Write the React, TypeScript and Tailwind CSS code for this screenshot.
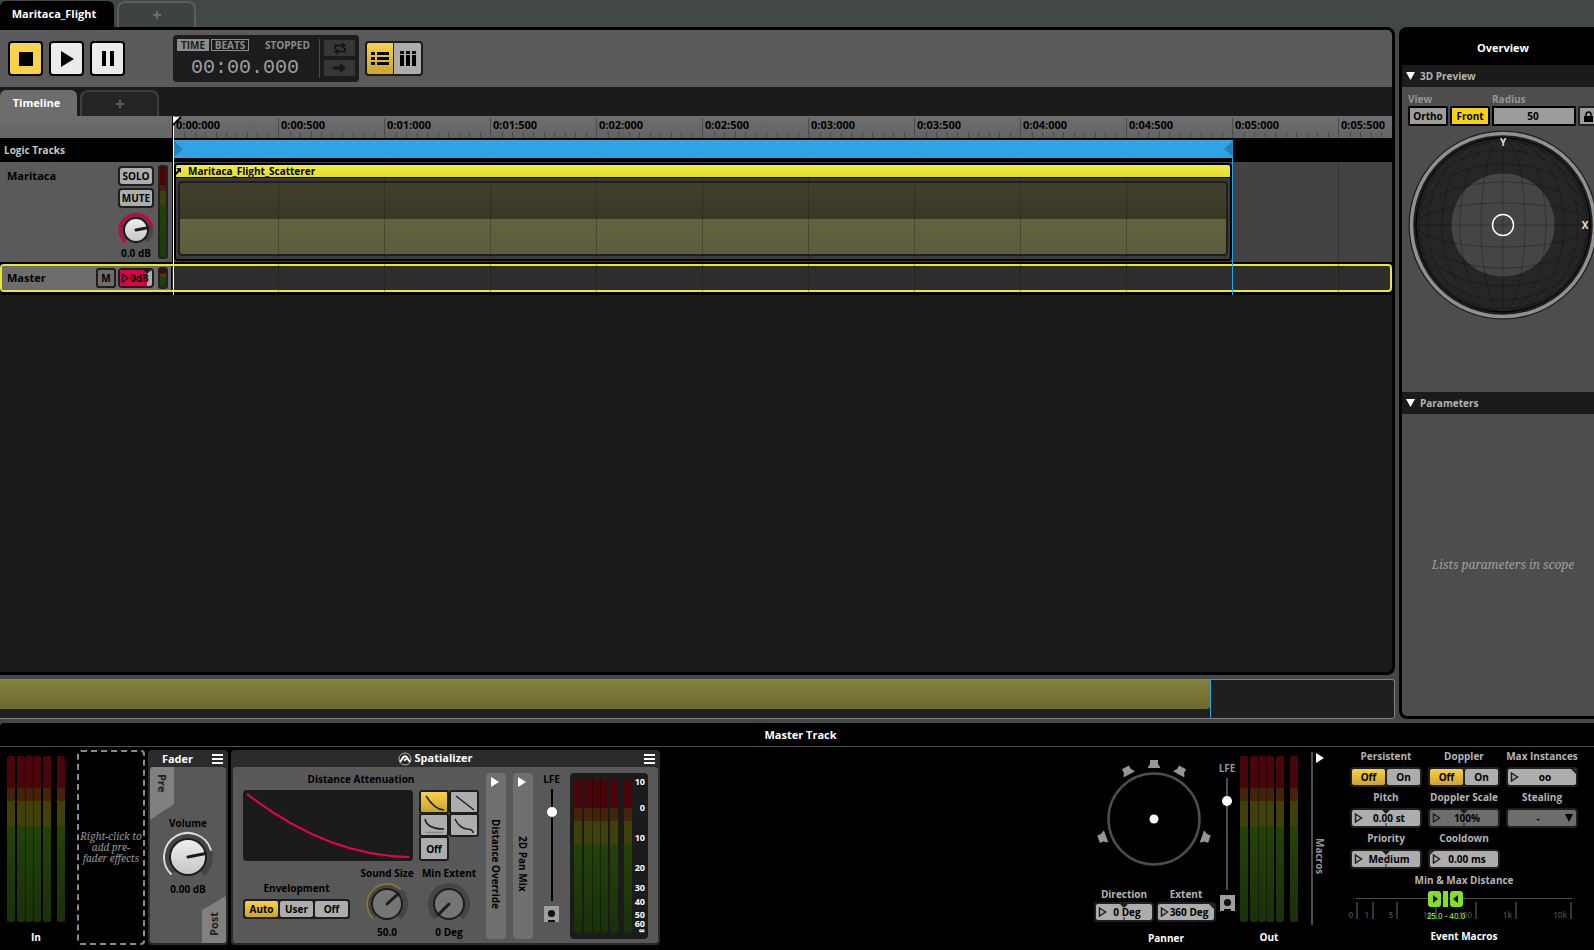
import React from 'react';

const MAJOR_TICKS = [
  '0:00:000', '0:00:500', '0:01:000', '0:01:500', '0:02:000', '0:02:500',
  '0:03:000', '0:03:500', '0:04:000', '0:04:500', '0:05:000', '0:05:500',
];

const METER_SCALE = [
  { label: '10', top: 2 },
  { label: '0', top: 19 },
  { label: '10', top: 38 },
  { label: '20', top: 58 },
  { label: '30', top: 71 },
  { label: '40', top: 80 },
  { label: '50', top: 88 },
  { label: '60', top: 94 },
  { label: '∞', top: 99 },
];

const DISTANCE_SCALE = [
  { label: '0', x: 7 },
  { label: '1', x: 23 },
  { label: '5', x: 47 },
  { label: '10', x: 86 },
  { label: '100', x: 126 },
  { label: '1k', x: 166 },
  { label: '10k', x: 221 },
];

/* ---------- Shared controls ---------- */

const point = (c: number, r: number, deg: number) => {
  const a = ((deg - 90) * Math.PI) / 180;
  return `${(c + r * Math.cos(a)).toFixed(2)} ${(c + r * Math.sin(a)).toFixed(2)}`;
};

const arc = (c: number, r: number, from: number, to: number) =>
  `M${point(c, r, from)} A${r} ${r} 0 ${to - from > 180 ? 1 : 0} 1 ${point(c, r, to)}`;

interface KnobProps {
  label: string;
  size: number;
  body: number;
  ring: number;
  angle: number;
  color: string;
  light?: boolean;
  thick?: number;
}

const Knob: React.FC<KnobProps> = ({ label, size, body, ring, angle, color, light, thick = 3 }) => {
  const c = size / 2;
  return (
    <label className="relative block shrink-0">
      <input type="range" aria-label={label} className="absolute inset-0 w-full h-full opacity-0" />
      <svg width={size} height={size} className="block">
        <defs>
          <linearGradient id="knobFace" x1="0" y1="0" x2="0" y2="1">
            <stop offset="0" stopColor="#f0f0f0" />
            <stop offset="1" stopColor="#c4c4c4" />
          </linearGradient>
        </defs>
        <path d={arc(c, ring - 2, -138, 138)} fill="none" stroke="#454545" strokeWidth="6" />
        {angle > -135 && (
          <path d={arc(c, ring, -135, angle - 6)} fill="none" stroke={color} strokeWidth={thick} strokeLinecap="round" />
        )}
        <circle cx={c} cy={c} r={body} fill={light ? 'url(#knobFace)' : '#757575'} stroke="#1c1c1c" strokeWidth="2" />
        <path d={`M${c} ${c} L${point(c, body, angle)}`} stroke="#1c1c1c" strokeWidth="3" strokeLinecap="round" />
      </svg>
    </label>
  );
};

const METER_BARS = ['', 'ml-[2px]', 'border-l border-black/40', 'border-l border-black/40', 'ml-[2px]', 'ml-[6px]'];

const Meter: React.FC = () => (
  <div className="flex h-full">
    {METER_BARS.map((cls, i) => (
      <div
        key={i}
        className={`w-[8px] rounded-[2px] bg-[linear-gradient(#49050a_0_19%,#43240a_19%_27%,#40400b_27%_42%,#24430a_42%,#1a3009)] ${cls}`}
      />
    ))}
  </div>
);

const SlimMeter: React.FC = () => (
  <div className="w-[10px] shrink-0 rounded-[3px] border-2 border-[#222] bg-[linear-gradient(#49050a_0_20%,#43240a_20%_27%,#40400b_27%_42%,#24430a_42%,#1d3a09)]" />
);

interface ToggleProps {
  options: string[];
}

const Toggle: React.FC<ToggleProps> = ({ options }) => (
  <div className="flex gap-[2px] h-[20px] p-[2px] rounded-[3px] bg-[#1e1e1e]">
    {options.map((option, i) => (
      <button
        key={option}
        className={`flex-1 rounded-[2px] text-[10px] leading-[16px] text-black ${
          i === 0 ? 'bg-linear-to-b from-[#fbd04a] to-[#c9a52f]' : 'bg-[#adadad]'
        }`}
      >
        {option}
      </button>
    ))}
  </div>
);

interface FieldProps {
  label: string;
  value: string;
  dim?: boolean;
  tight?: boolean;
  mark?: 'center' | 'left' | 'right';
}

const Field: React.FC<FieldProps> = ({ label, value, dim, tight, mark }) => (
  <label className="block text-[10px] text-[#b4b4b4] text-center whitespace-nowrap">
    <span className={`block leading-[12px] ${tight ? 'mb-[2px]' : 'mb-[5px]'}`}>{label}</span>
    <span className={`relative block h-[20px] border-2 border-[#1e1e1e] rounded-[4px] overflow-hidden ${dim ? 'bg-[#6d6d6d]' : 'bg-[#adadad]'}`}>
      <svg width="10" height="10" className="absolute left-[2px] top-[3px]">
        <path d="M1.5 1 L7.5 5 L1.5 9 Z" fill="none" stroke="#222" strokeWidth="1.5" />
      </svg>
      {mark === 'center' && (
        <svg width="8" height="16" className="absolute left-1/2 -ml-[4px] top-0">
          <path d="M0 0 H8 L4 4 Z M3.5 13 H4.5 V16 H3.5 Z" fill="#1e1e1e" />
        </svg>
      )}
      {mark === 'right' && (
        <svg width="5" height="5" className="absolute right-0 top-0">
          <path d="M0 0 H5 V5 Z" fill="#1e1e1e" />
        </svg>
      )}
      {mark === 'left' && (
        <svg width="4" height="4" className="absolute left-0 top-0">
          <path d="M0 0 H4 L0 4 Z" fill="#1e1e1e" />
        </svg>
      )}
      <input
        defaultValue={value}
        className="relative block w-full h-[16px] pl-[6px] text-center text-[10px] leading-[16px] text-black bg-transparent outline-none"
      />
    </span>
  </label>
);

interface LfeProps {
  labelClass: string;
  trackClass: string;
}

const LfeSlider: React.FC<LfeProps> = ({ labelClass, trackClass }) => (
  <div className="flex flex-col items-center">
    <span className={`text-[10px] leading-[12px] ${labelClass}`}>LFE</span>
    <label className="relative block w-[10px] h-[112px] mt-[4px]">
      <input type="range" aria-label="LFE level" className="absolute inset-0 w-full h-full opacity-0" />
      <span className={`block w-[2px] h-full mx-auto ${trackClass}`} />
      <span className="absolute left-0 top-[18px] w-[10px] h-[10px] rounded-full bg-white" />
    </label>
    <svg width="15" height="16" className="block mt-[5px]">
      <path d="M0 0 H15 V16 H0 Z" fill="#a0a0a0" />
      <circle cx="7.5" cy="7.5" r="3.6" fill="#111" />
      <path d="M4 14 H11 V16 H4 Z" fill="#111" />
    </svg>
  </div>
);

const MenuIcon: React.FC = () => (
  <button aria-label="Effect menu" className="absolute right-[5px] top-[4px] flex flex-col gap-[2px] w-[11px]">
    <span className="h-[2px] bg-white" />
    <span className="h-[2px] bg-white" />
    <span className="h-[2px] bg-white" />
  </button>
);

/* ---------- Editor ---------- */

const Transport: React.FC = () => (
  <div className="flex items-center h-[57px] shrink-0 pl-[8px] bg-[#5a5a5a]">
    <div className="flex gap-[6px]">
      <button aria-label="Stop" className="w-[35px] h-[35px] flex items-center justify-center rounded-[4px] border-2 border-black bg-[#fbd14b]">
        <svg width="14" height="14"><path d="M0 0 H14 V14 H0 Z" /></svg>
      </button>
      <button aria-label="Play" className="w-[35px] h-[35px] flex items-center justify-center rounded-[4px] border-2 border-black bg-[#ebebeb]">
        <svg width="14" height="16"><path d="M1 0 L14 8 L1 16 Z" /></svg>
      </button>
      <button aria-label="Pause" className="w-[35px] h-[35px] flex items-center justify-center rounded-[4px] border-2 border-black bg-[#ebebeb]">
        <svg width="12" height="15"><path d="M0 0 H4 V15 H0 Z M8 0 H12 V15 H8 Z" /></svg>
      </button>
    </div>

    <div className="flex w-[186px] h-[47px] ml-[48px] p-[4px] rounded-[4px] bg-[#1c1c1c]">
      <div className="w-[142px]">
        <div className="flex items-center gap-[2px] text-[10px] leading-[12px] text-[#8c8c8c]">
          <button className="w-[32px] h-[12px] bg-[#8c8c8c] text-[#1c1c1c]">TIME</button>
          <button className="w-[38px] h-[12px] leading-[10px] border border-[#8c8c8c]">BEATS</button>
          <span className="ml-[14px]">STOPPED</span>
        </div>
        <div className="mt-[3px] pr-[6px] text-center font-normal text-[20px] leading-[28px] text-[#a0a0a0] font-['Liberation_Mono',monospace]">
          00:00.000
        </div>
      </div>
      <div className="w-px bg-[#4a4a4a]" />
      <div className="flex flex-col gap-[4px] ml-[4px] mt-px">
        <button aria-label="Loop" className="w-[31px] h-[16px] flex items-center justify-center rounded-[2px] bg-[#373737]">
          <svg width="14" height="13" fill="none" stroke="#161616" strokeWidth="2">
            <path d="M2 7 V3.5 H10 M12 6 V9.5 H4" />
            <path d="M9 0 L13 3.5 L9 7 Z M5 6 L1 9.5 L5 13 Z" fill="#161616" stroke="none" />
          </svg>
        </button>
        <button aria-label="Follow playhead" className="w-[31px] h-[16px] flex items-center justify-center rounded-[2px] bg-[#373737]">
          <svg width="13" height="10"><path d="M0 3.5 H7 V0 L13 5 L7 10 V6.5 H0 Z" fill="#161616" /></svg>
        </button>
      </div>
    </div>

    <div className="flex ml-[6px] rounded-[4px] border-2 border-[#1c1c1c] bg-[#1c1c1c] gap-px">
      <button aria-label="Track view" className="w-[26px] h-[31px] flex items-center justify-center rounded-l-[2px] bg-linear-to-b from-[#fbd04a] to-[#c9a52f]">
        <svg width="18" height="13"><path d="M0 0 H4 V3 H0 Z M6 0 H18 V3 H6 Z M0 5 H4 V8 H0 Z M6 5 H18 V8 H6 Z M0 10 H4 V13 H0 Z M6 10 H18 V13 H6 Z" /></svg>
      </button>
      <button aria-label="Mixer view" className="w-[27px] h-[31px] flex items-center justify-center rounded-r-[2px] bg-[#adadad]">
        <svg width="16" height="15"><path d="M0 0 H4 V3 H0 Z M6 0 H10 V3 H6 Z M12 0 H16 V3 H12 Z M0 4 H4 V15 H0 Z M6 4 H10 V15 H6 Z M12 4 H16 V15 H12 Z" /></svg>
      </button>
    </div>
  </div>
);

const Ruler: React.FC = () => (
  <div className="flex h-[22px] overflow-hidden bg-linear-to-b from-[#6d6d6d] to-[#646464]">
    {MAJOR_TICKS.map((tick, i) => (
      <div key={tick} className={`shrink-0 flex flex-col justify-between mt-[2px] border-l ${i === 0 ? 'w-[105px] border-transparent' : 'w-[106px] border-[#4c4c4c]'}`}>
        <span className="pl-[2px] text-[11px] leading-[14px] text-black">{tick}</span>
        <div className="grid grid-cols-10 h-[6px]">
          {Array.from({ length: 10 }, (_, n) => (
            <span key={n} className={`border-l ${n === 0 ? 'border-transparent' : 'border-[#4c4c4c]'}`} />
          ))}
        </div>
      </div>
    ))}
  </div>
);

const TrackHeaders: React.FC = () => (
  <div className="w-[173px] shrink-0 border-r border-black">
    <div className="h-[22px] bg-linear-to-b from-[#6d6d6d] to-[#646464]" />
    <div className="h-[24px] pl-[4px] bg-black text-[10px] leading-[24px] text-[#c8c8c8]">Logic Tracks</div>
    <div className="flex h-[100px] pl-[7px] pr-[4px] bg-[#5a5a5a]">
      <span className="flex-1 mt-[6px] text-[11px] leading-[16px] text-black">Maritaca</span>
      <div className="flex flex-col items-center w-[36px] mt-[4px] mr-[4px] text-[10px] text-black">
        <button className="w-full h-[20px] mb-[2px] leading-[16px] rounded-[4px] border-2 border-[#1e1e1e] bg-[#adadad]">SOLO</button>
        <button className="w-full h-[20px] leading-[16px] rounded-[4px] border-2 border-[#1e1e1e] bg-[#adadad]">MUTE</button>
        <div className="-mx-[2px] mt-[3px]">
          <Knob label="Maritaca volume" size={38} body={12} ring={16} angle={79} color="#d4003f" light />
        </div>
        <span className="leading-[12px] -mt-[2px] whitespace-nowrap">0.0 dB</span>
      </div>
      <div className="flex py-[3px]">
        <SlimMeter />
      </div>
    </div>
  </div>
);

const Clip: React.FC = () => (
  <div className="w-[1058px] h-[98px] ml-px rounded-[4px] border-2 border-black bg-[#3b3b3b] overflow-hidden">
    <div className="relative z-10 flex items-center h-[13px] border-b border-black bg-linear-to-b from-[#f0ec3e] to-[#e2de36]">
      <svg width="6" height="8" className="-ml-px"><path d="M1 1 H6 V6 L4.5 4.5 L1 8 L0 6.5 L3 3 Z" /></svg>
      <span className="ml-[7px] text-[10px] leading-[12px] text-black">Maritaca_Flight_Scatterer</span>
    </div>
    <div className="mx-[2px] mt-[3px] h-[75px] rounded-[4px] border-2 border-[#1e1e1e] bg-[linear-gradient(#42402c_0,#3b3926_50%,#64633f_50%,#5c5b3c)]" />
  </div>
);

const Timeline: React.FC = () => (
  <div className="relative shrink-0 bg-black">
    <div className="flex">
      <TrackHeaders />
      <div className="relative flex-1 min-w-0 overflow-hidden">
        <Ruler />
        <div className="h-[24px] pt-[2px]">
          <div className="relative z-10 flex justify-between w-[1059px] h-[18px] ml-px bg-[#2fa3e4]">
            <svg width="9" height="18"><path d="M0 1 L9 9 L0 17 Z" fill="#2580b4" /></svg>
            <svg width="9" height="18"><path d="M9 1 L0 9 L9 17 Z" fill="#2580b4" /></svg>
          </div>
        </div>
        <div className="h-[100px] pt-px bg-[#434343]">
          <Clip />
        </div>
      </div>
    </div>

    <div className="flex h-[28px] mt-[2px] mb-[3px] rounded-[4px] border-2 border-[#e9e53f] bg-[#2e2e2e]">
      <div className="flex items-center w-[170px] h-full pl-[5px] pr-[3px] bg-[#6d6d6d] border-r border-black text-black">
        <span className="flex-1 text-[11px] leading-[16px]">Master</span>
        <button className="w-[20px] h-[20px] text-[10px] leading-[16px] rounded-[3px] border-2 border-[#1e1e1e]">M</button>
        <div className="relative w-[36px] h-[20px] ml-[2px] mr-[4px] rounded-[4px] border-2 border-[#1e1e1e] bg-[#adadad] overflow-hidden">
          <svg width="32" height="16" className="absolute inset-0">
            <path d="M0 0 H23 L27 4 V16 H0 Z" fill="#dc0046" />
            <path d="M23 0 H31 L27 4 Z" fill="#1e1e1e" />
            <path d="M2.500 4 L8 8 L2.500 12 Z" fill="none" stroke="#1e1e1e" strokeWidth="1.500" />
          </svg>
          <input aria-label="Master level" defaultValue="0dB" className="relative block w-full h-[16px] pl-[10px] text-[10px] leading-[16px] bg-transparent outline-none" />
        </div>
        <div className="flex h-[22px]">
          <SlimMeter />
        </div>
      </div>
    </div>

    {/* Grid lines, loop end and playhead run across every track */}
    <div className="absolute left-[173px] right-0 top-[24px] bottom-[3px] overflow-hidden pointer-events-none">
      <div className="flex h-full">
        {MAJOR_TICKS.map((tick, i) => (
          <div key={tick} className={`shrink-0 ${i === 0 ? 'w-[105px]' : 'w-[106px] border-l border-[#141414]/30'}`} />
        ))}
      </div>
    </div>
    <div className="absolute left-[1232px] top-[24px] bottom-0 w-px bg-[#2fa3e4]" />
    <div className="absolute left-[173px] top-0 bottom-0 w-px bg-white z-20" />
    <svg width="10" height="10" className="absolute left-[172px] top-0 z-20">
      <path d="M1 1 H9 L1 9 Z" fill="#fff" />
      <path d="M9 1 L1 9" stroke="#000" strokeWidth="2" />
    </svg>
  </div>
);

const Editor: React.FC = () => (
  <section className="flex-1 min-h-0 flex flex-col overflow-hidden rounded-r-[8px] border-y-[3px] border-r-[3px] border-black bg-[#1b1b1b]">
    <Transport />
    <div className="flex items-end h-[29px] shrink-0 gap-[3px] bg-[#1b1b1b]">
      <button className="w-[77px] h-[26px] pr-[4px] rounded-t-[6px] bg-[#6d6d6d] text-[11px] leading-[24px] text-white">Timeline</button>
      <button aria-label="New sheet" className="w-[79px] h-[26px] flex items-center justify-center rounded-t-[8px] border-2 border-b-0 border-[#3f3f3f] bg-[#242424]">
        <svg width="8" height="8"><path d="M3 0 H5 V3 H8 V5 H5 V8 H3 V5 H0 V3 H3 Z" fill="#5a5a5a" /></svg>
      </button>
    </div>
    <Timeline />
  </section>
);

/* ---------- Overview ---------- */

const SPHERE_RADII = [22, 43, 61, 75, 84];

const Sphere: React.FC = () => (
  <svg width="190" height="190" className="block">
    <circle cx="95" cy="95" r="94.500" fill="#1e1e1e" />
    <circle cx="95" cy="95" r="91.500" fill="#1e1e1e" stroke="#919191" strokeWidth="3.500" />
    <circle cx="95" cy="95" r="87" fill="#262626" />
    <circle cx="95" cy="95" r="51.500" fill="#454545" />
    <g fill="none" stroke="#000" strokeOpacity="0.25">
      <circle cx="95" cy="95" r="87" strokeOpacity="0.8" />
      {SPHERE_RADII.map((r) => (
        <ellipse key={`v${r}`} cx="95" cy="95" rx={r} ry="87" />
      ))}
      {SPHERE_RADII.map((r) => (
        <ellipse key={`h${r}`} cx="95" cy="95" rx="87" ry={r} />
      ))}
      <path d="M95 8 V182 M8 95 H182" />
    </g>
    <circle cx="95" cy="95" r="10.500" fill="none" stroke="#fff" strokeWidth="1.500" />
    <text x="95" y="16" textAnchor="middle" fontSize="10" fill="#e0e0e0">Y</text>
    <text x="177" y="99" textAnchor="middle" fontSize="10" fill="#e0e0e0">X</text>
  </svg>
);

const SectionTitle: React.FC<{ title: string }> = ({ title }) => (
  <button className="flex items-center w-full h-[22px] shrink-0 pl-[4px] gap-[5px] bg-[#1b1b1b] text-[10px] text-[#b4b4b4]">
    <svg width="9" height="8"><path d="M0 0 H9 L4.500 8 Z" fill="#fff" /></svg>
    {title}
  </button>
);

const Overview: React.FC = () => (
  <aside className="w-[195px] shrink-0 overflow-hidden">
    <div className="flex flex-col w-[208px] h-full overflow-hidden rounded-[8px] border-x-[3px] border-b-[3px] border-black bg-[#4d4d4d]">
      <h2 className="h-[38px] shrink-0 bg-black text-center text-[11px] leading-[42px] text-white">Overview</h2>
      <SectionTitle title="3D Preview" />
      <div className="h-[305px] shrink-0 pl-[6px] pt-[5px]">
        <div className="flex gap-[2px] text-[10px] text-black">
          <div>
            <span className="block leading-[14px] text-[#969696]">View</span>
            <div className="flex gap-[2px]">
              <button className="w-[40px] h-[20px] leading-[16px] rounded-[2px] border-2 border-black bg-[#9c9c9c]">Ortho</button>
              <button className="w-[40px] h-[20px] leading-[16px] rounded-[2px] border-2 border-black bg-[#f8d210]">Front</button>
            </div>
          </div>
          <label>
            <span className="block leading-[14px] text-[#969696]">Radius</span>
            <input defaultValue="50" className="block w-[84px] h-[20px] pr-[2px] text-center leading-[16px] border-2 border-black bg-[#9c9c9c]" />
          </label>
          <button aria-label="Lock radius" className="self-end w-[20px] h-[20px] flex items-center justify-center rounded-[2px] border-2 border-[#1e1e1e] bg-[#9c9c9c]">
            <svg width="9" height="11">
              <path d="M0 5 H9 V11 H0 Z" />
              <path d="M2 5 V3.500 A2.500 2.500 0 0 1 7 3.500 V5" fill="none" stroke="#000" strokeWidth="1.500" />
            </svg>
          </button>
        </div>
        <div className="mt-[4px]">
          <Sphere />
        </div>
      </div>
      <SectionTitle title="Parameters" />
      <div className="flex-1 flex items-center justify-center font-['Noto_Serif','Droid_Serif','DejaVu_Serif','Liberation_Serif',serif] font-normal italic text-[12px] text-[#a0a0a0] whitespace-nowrap">
        Lists parameters in scope
      </div>
    </div>
  </aside>
);

/* ---------- Deck ---------- */

const FaderPanel: React.FC = () => (
  <section className="relative flex flex-col w-[80px] h-[195px] ml-[3px] px-[2px] pb-[2px] rounded-[4px] bg-[#2b2b2b]">
    <h3 className="h-[17px] pr-[21px] text-center text-[11px] leading-[18px] text-white">Fader</h3>
    <MenuIcon />
    <div className="flex-1 flex flex-col rounded-[3px] bg-[#585858] overflow-hidden">
      <div className="h-[49px] w-[24px] mb-[-4px]">
        <div className="h-[53px] flex justify-center pt-[7px] bg-[#808080] [clip-path:polygon(0_0,100%_0,100%_70%,0_100%)] text-[11px] text-[#1e1e1e]">
          <span className="[writing-mode:vertical-rl] leading-[24px]">Pre</span>
        </div>
      </div>
      <div className="flex flex-col items-center mt-[4px] text-[10px] leading-[14px] text-black">
        <span className="mb-px">Volume</span>
        <Knob label="Fader volume" size={52} body={18} ring={24} angle={79} color="#d8d8d8" light thick={2} />
        <span className="-mt-px">0.00 dB</span>
      </div>
      <div className="mt-auto ml-auto w-[24px] h-[53px] flex justify-center items-end pb-[7px] bg-[#808080] [clip-path:polygon(0_30%,100%_0,100%_100%,0_100%)] text-[11px] text-[#1e1e1e]">
        <span className="[writing-mode:vertical-rl] rotate-180 leading-[24px]">Post</span>
      </div>
    </div>
  </section>
);

const CURVES = [
  'M5 4 Q14 18 23 18',
  'M5 4 L23 18',
  'M4 4 Q6 14 23 14',
  'M4 4 Q8 13 16 14 Q22 14 22 18',
];

const CurvePicker: React.FC = () => (
  <div className="grid grid-cols-2 w-[60px] content-start">
    {CURVES.map((d, i) => (
      <button
        key={d}
        aria-label={`Attenuation curve ${i + 1}`}
        className={`w-[30px] h-[24px] -mb-px border-2 border-[#1e1e1e] rounded-[3px] flex items-center justify-center ${
          i === 0 ? 'bg-linear-to-b from-[#fbd04a] to-[#c9a52f]' : 'bg-[#adadad]'
        }`}
      >
        <svg width="26" height="20" fill="none" stroke="#1e1e1e" strokeWidth="1.500">
          <path d={d} />
          {i === 2 && <path d="M4 17.500 H22" stroke="#8a8a8a" />}
        </svg>
      </button>
    ))}
    <button className="w-[30px] h-[25px] border-2 border-[#1e1e1e] rounded-[3px] bg-[#adadad] text-[10px] leading-[20px] text-black">Off</button>
  </div>
);

const Rail: React.FC<{ title: string }> = ({ title }) => (
  <button className="relative w-[20px] h-full ml-[7px] pt-[16px] flex items-center justify-center rounded-[4px] bg-[#6f6f6f] text-[10px] text-black">
    <svg width="8" height="10" className="absolute left-[5px] top-[4px]"><path d="M0 0 L8 5 L0 10 Z" fill="#fff" /></svg>
    <span className="[writing-mode:vertical-rl] leading-[20px]">{title}</span>
  </button>
);

const Spatializer: React.FC = () => (
  <section className="relative flex flex-col w-[429px] h-[195px] ml-[3px] px-[2px] pb-[2px] rounded-[4px] bg-[#2b2b2b]">
    <h3 className="flex items-center justify-center gap-[2px] h-[17px] pr-[20px] text-[11px] text-white">
      <svg width="14" height="14" fill="none">
        <circle cx="7" cy="7" r="6" stroke="#b0b0b0" />
        <path d="M2 10 L5.500 5 Q7 3.500 8.500 5 L12 10 M6 8.500 L8.500 7" stroke="#fff" strokeWidth="2" />
      </svg>
      Spatializer
    </h3>
    <MenuIcon />
    <div className="flex-1 flex pl-[10px] pr-[10px] pt-[6px] pb-[4px] rounded-[3px] bg-[#585858] text-[10px] leading-[14px] text-black">
      <div className="w-[236px]">
        <div className="text-center leading-[12px] mb-[5px]">Distance Attenuation</div>
        <div className="flex gap-[6px]">
          <div className="w-[170px] h-[71px] rounded-[4px] bg-[#1b1b1b]">
            <svg width="170" height="71"><path d="M4 4 Q84 66 166 67" fill="none" stroke="#ee0050" strokeWidth="2" /></svg>
          </div>
          <CurvePicker />
        </div>
        <div className="flex h-[78px]">
          <div className="w-[107px] pt-[20px] text-center">
            <div className="mb-[4px]">Envelopment</div>
            <Toggle options={['Auto', 'User', 'Off']} />
          </div>
          <div className="flex flex-col items-center w-[74px] pt-[5px]">
            <span>Sound Size</span>
            <div className="my-px">
              <Knob label="Sound size" size={46} body={15} ring={20} angle={48} color="#82753a" thick={2} />
            </div>
            <span className="-mt-[3px]">50.0</span>
          </div>
          <div className="flex flex-col items-center w-[50px] pt-[5px] whitespace-nowrap">
            <span>Min Extent</span>
            <div className="my-px">
              <Knob label="Min extent" size={46} body={15} ring={20} angle={-135} color="#82753a" />
            </div>
            <span className="-mt-[3px]">0 Deg</span>
          </div>
        </div>
      </div>
      <Rail title="Distance Override" />
      <Rail title="2D Pan Mix" />
      <div className="flex justify-center w-[37px]">
        <LfeSlider labelClass="text-black" trackClass="bg-black" />
      </div>
      <div className="flex w-[78px] h-full py-[6px] pl-[4px] rounded-[4px] bg-[#1b1b1b]">
        <Meter />
        <div className="relative flex-1 text-[9px] text-white">
          {METER_SCALE.map(({ label, top }, i) => (
            <span key={i} className="absolute right-[3px] -mt-[6px] leading-[12px]" style={{ top: `${top}%` }}>{label}</span>
          ))}
        </div>
      </div>
    </div>
  </section>
);

const SPEAKERS = [0, -29, 29, -110, 110];

const Panner: React.FC = () => (
  <div className="w-[126px]">
    <svg width="126" height="138" className="block">
      <circle cx="64" cy="69" r="45.500" fill="none" stroke="#4d4d4d" strokeWidth="2.500" />
      <circle cx="64" cy="69" r="4.500" fill="#fff" />
      {SPEAKERS.map((deg) => (
        <path key={deg} transform={`rotate(${deg} 64 69)`} d="M60 10 H68 V14 L70 17 V18 H58 V17 L60 14 Z" fill="#969696" />
      ))}
    </svg>
    <div className="grid grid-cols-2 gap-[2px] pl-[4px]">
      <Field label="Direction" value="0 Deg" mark="center" tight />
      <Field label="Extent" value="360 Deg" mark="right" tight />
    </div>
    <div className="mt-[9px] pl-[26px] text-center text-[10px] leading-[14px] text-white">Panner</div>
  </div>
);

const Macros: React.FC = () => (
  <section className="w-[228px] ml-[23px] mr-[16px]">
    <div className="grid grid-cols-3 gap-x-[6px] gap-y-[4px]">
      <div className="text-center text-[10px] text-[#b4b4b4]">
        <div className="leading-[12px] mb-[5px]">Persistent</div>
        <Toggle options={['Off', 'On']} />
      </div>
      <div className="text-center text-[10px] text-[#b4b4b4]">
        <div className="leading-[12px] mb-[5px]">Doppler</div>
        <Toggle options={['Off', 'On']} />
      </div>
      <Field label="Max Instances" value="oo" mark="right" />
      <Field label="Pitch" value="0.00 st" mark="center" />
      <Field label="Doppler Scale" value="100%" mark="center" dim />
      <label className="block text-[10px] text-[#b4b4b4] text-center">
        <span className="block leading-[12px] mb-[5px]">Stealing</span>
        <span className="relative block h-[20px] border-2 border-[#1e1e1e] rounded-[4px] bg-[#6d6d6d]">
          <select className="block w-full h-[16px] pr-[8px] appearance-none text-center leading-[16px] text-black">
            <option>-</option>
          </select>
          <svg width="8" height="8" className="absolute right-[3px] top-[4px]"><path d="M0 0 H8 L4 8 Z" /></svg>
        </span>
      </label>
      <Field label="Priority" value="Medium" mark="center" />
      <Field label="Cooldown" value="0.00 ms" mark="left" />
    </div>
    <div className="mt-[4px] text-center text-[10px] leading-[14px] text-[#b4b4b4]">Min &amp; Max Distance</div>
    <svg width="228" height="34" className="block mt-[3px] overflow-visible font-semibold">
      <path d="M6 8.500 H222" stroke="#4d4d4d" />
      {DISTANCE_SCALE.map(({ label, x }) => (
        <g key={label}>
          <path d={`M${x} 12 V29`} stroke="#333" strokeWidth="2" />
          <text x={x - 4} y="28" textAnchor="end" fontSize="8" fill="#4d4d4d">{label}</text>
        </g>
      ))}
      <rect x="78" y="1" width="13" height="16" rx="3" fill="#86dd2b" />
      <rect x="93" y="1" width="5" height="16" fill="#86dd2b" />
      <rect x="100" y="1" width="13" height="16" rx="3" fill="#86dd2b" />
      <path d="M83 5 L88 9 L83 13 Z M108 5 L103 9 L108 13 Z" fill="#111" />
      <text x="96" y="29" textAnchor="middle" fontSize="8" fill="#86dd2b">25.0 - 40.0</text>
    </svg>
    <div className="mt-[5px] text-center text-[10px] leading-[14px] text-white">Event Macros</div>
  </section>
);

const Deck: React.FC = () => (
  <footer className="shrink-0 overflow-hidden rounded-tl-[4px] bg-black">
    <h2 className="h-[24px] pl-[7px] border-b border-[#4d4d4d] text-center text-[11px] leading-[24px] text-white">Master Track</h2>
    <div className="flex h-[203px] pt-[3px]">
      <div className="w-[58px] ml-[7px] pt-[6px] text-center text-[10px] leading-[14px] text-white">
        <div className="h-[166px] mb-[8px]"><Meter /></div>
        In
      </div>
      <div className="flex items-center justify-center w-[68px] h-[195px] ml-[12px] rounded-[4px] border-2 border-dashed border-[#8c8c8c] text-center font-['Noto_Serif','Droid_Serif','DejaVu_Serif','Liberation_Serif',serif] font-normal italic text-[10px] leading-[11px] text-[#969696]">
        <span className="-mx-[4px]">Right-click to<br />add pre-<br />fader effects</span>
      </div>
      <FaderPanel />
      <Spatializer />
      <div className="flex-1" />
      <Panner />
      <div className="flex justify-center w-[22px] pt-[12px]">
        <LfeSlider labelClass="text-[#969696]" trackClass="bg-[#4d4d4d]" />
      </div>
      <div className="w-[58px] ml-[2px] pt-[6px] text-center text-[10px] leading-[14px] text-white">
        <div className="h-[166px] mb-[8px]"><Meter /></div>
        Out
      </div>
      <div className="w-[2px] h-[173px] mt-[2px] ml-[13px] bg-[#4d4d4d]" />
      <button className="relative w-[14px] h-[173px] mt-[2px] flex items-center justify-center pt-[36px] text-[10px] text-[#969696]">
        <svg width="8" height="10" className="absolute left-[3px] top-px"><path d="M0 0 L8 5 L0 10 Z" fill="#fff" /></svg>
        <span className="[writing-mode:vertical-rl] leading-[14px]">Macros</span>
      </button>
      <Macros />
    </div>
  </footer>
);

const App: React.FC = () => {
  return (
    <div className="h-screen min-h-[720px] flex flex-col overflow-hidden bg-[#434747] font-['Open_Sans','Noto_Sans',sans-serif] font-bold">
      <nav className="flex items-end h-[27px] shrink-0 gap-[3px]">
        <button className="w-[114px] h-[26px] pr-[6px] rounded-t-[6px] bg-black text-[11px] leading-[24px] text-white">Maritaca_Flight</button>
        <button aria-label="New tab" className="w-[79px] h-[26px] flex items-center justify-center rounded-t-[8px] border-2 border-b-0 border-[#5c5c5e] bg-[#3e4242]">
          <svg width="8" height="8"><path d="M3 0 H5 V3 H8 V5 H5 V8 H3 V5 H0 V3 H3 Z" fill="#6b6b6d" /></svg>
        </button>
      </nav>
      <main className="flex-1 min-h-0 flex gap-[4px] pb-[4px]">
        <div className="flex-1 min-w-0 flex flex-col gap-[4px]">
          <Editor />
          <div className="flex h-[40px] shrink-0 rounded-r-[3px] border border-l-0 border-[#808080] bg-[#1f1f1f]">
            <div className="w-[86.8%] h-[29px] rounded-br-[3px] bg-linear-to-b from-[#84813a] to-[#6b6930]" />
            <div className="w-px bg-[#2fa3e4]" />
          </div>
        </div>
        <Overview />
      </main>
      <Deck />
    </div>
  );
};

export default App;
